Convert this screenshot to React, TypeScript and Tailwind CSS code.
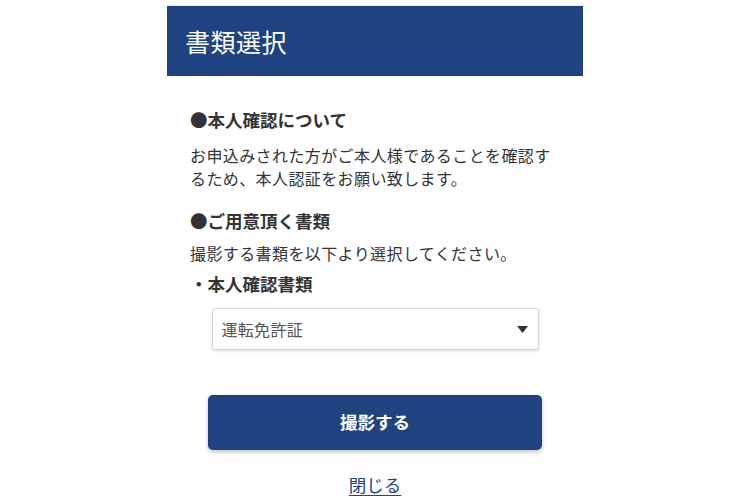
const FONT = "font-['Noto_Sans_CJK_JP','Noto_Sans',sans-serif]";

const DocumentSelect = () => {
  return (
    <div className={`min-h-[500px] bg-white ${FONT} text-[#333333]`}>
      <div className="w-[416px] mx-auto pt-[5px]">
        {/* Title bar */}
        <div className="border-t border-[#eeeeee] h-[71px] bg-[#1e4380] flex items-center px-[18px]">
          <h1 className="text-white text-[25px] leading-none tracking-[0.5px]">書類選択</h1>
        </div>

        {/* Body */}
        <div className="px-[23px]">
          <h2 className="mt-[32px] text-[17.5px] leading-[24px] font-bold">●本人確認について</h2>
          <p className="mt-[12px] text-[16px] leading-[23px] tracking-[0.4px]">
            お申込みされた方がご本人様であることを確認するため、本人認証をお願い致します。
          </p>

          <h2 className="mt-[19px] text-[17.5px] leading-[24px] font-bold">●ご用意頂く書類</h2>
          <p className="mt-[9px] text-[16px] leading-[23px] tracking-[0.4px]">
            撮影する書類を以下より選択してください。
          </p>
          <h3 className="mt-[7px] text-[17.5px] leading-[24px] font-bold">・本人確認書類</h3>

          {/* Select box */}
          <div className="mt-[12px] mx-auto w-[327px] h-[42px] rounded-[3px] border border-[#d6d6d6] shadow-[0_1px_3px_rgba(0,0,0,0.15)] flex items-center justify-between pl-[9px] pr-[10px]">
            <span className="text-[16px] text-[#555555] tracking-[0.3px]">運転免許証</span>
            <svg width="11" height="7" viewBox="0 0 11 7">
              <path d="M0 0 H11 L5.5 7 Z" fill="#333333" />
            </svg>
          </div>

          {/* Action */}
          <button className="mt-[45px] mx-auto w-[334px] h-[55px] rounded-[5px] bg-[#1e4380] shadow-[0_2px_4px_rgba(0,0,0,0.25)] flex items-center justify-center text-white text-[17.5px] font-bold">
            撮影する
          </button>

          <div className="mt-[23px] flex justify-center">
            <a href="#" className="text-[#1e4380] text-[17.5px] leading-[24px] underline underline-offset-[3px]">
              閉じる
            </a>
          </div>
        </div>
      </div>
    </div>
  );
};

export default function App() {
  return <DocumentSelect />;
}
